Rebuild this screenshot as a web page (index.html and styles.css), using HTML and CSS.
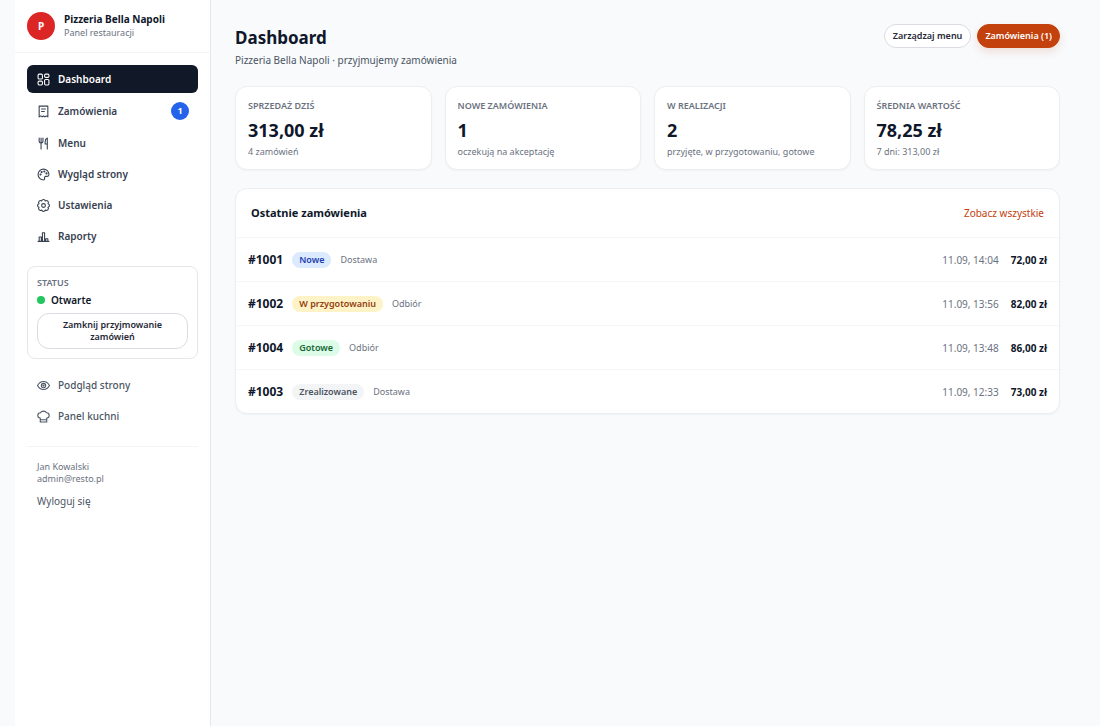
FILE: index.html
```html
<!DOCTYPE html>
<html lang="pl">
<head>
    <meta charset="UTF-8">
    <meta name="viewport" content="width=device-width, initial-scale=1.0">
    <title>Dashboard - Pizzeria Bella Napoli</title>
    <link rel="stylesheet" href="styles.css">
</head>
<body>
    <div class="layout">
        <aside class="sidebar">
            <div class="brand">
                <span class="brand-logo">P</span>
                <div>
                    <p class="brand-name">Pizzeria Bella Napoli</p>
                    <p class="brand-sub">Panel restauracji</p>
                </div>
            </div>

            <nav class="nav">
                <a href="#" class="nav-link active">
                    <svg class="icon" viewBox="0 0 24 24"><rect x="2" y="2" width="8" height="9" rx="2"/><rect x="14" y="2" width="8" height="6" rx="2"/><rect x="2" y="15" width="8" height="7" rx="2"/><rect x="14" y="12" width="8" height="10" rx="2"/></svg>
                    Dashboard
                </a>
                <a href="#" class="nav-link with-badge">
                    <svg class="icon" viewBox="0 0 24 24"><path d="M4 2h16v20l-3-2-2.500 2-2.500-2-2.500 2L7 20l-3 2z"/><path d="M8.500 7.500h7M8.500 12h5"/></svg>
                    Zamówienia
                    <span class="badge">1</span>
                </a>
                <a href="#" class="nav-link">
                    <svg class="icon" viewBox="0 0 24 24"><path d="M4 2v6a3 3 0 0 0 3 3h1a3 3 0 0 0 3-3V2M7.500 2v20M19 22V2c-2.500 1-4 4-4 7v4h4"/></svg>
                    Menu
                </a>
                <a href="#" class="nav-link">
                    <svg class="icon" viewBox="0 0 24 24"><path d="M12 2a10 10 0 1 0 0 20c1.500 0 2.300-1.200 2-2.500-.6-2.500.3-4 2.500-4H19c2 0 3-1.500 3-3.500C22 6.500 17.500 2 12 2z"/><circle cx="6.500" cy="12" r="1"/><circle cx="8.500" cy="7.500" r="1"/><circle cx="13.500" cy="6.500" r="1"/><circle cx="17.500" cy="10" r="1"/></svg>
                    Wygląd strony
                </a>
                <a href="#" class="nav-link">
                    <svg class="icon" viewBox="0 0 24 24"><circle cx="12" cy="12" r="3.500"/><path d="M20.300 8.600a3.500 3.500 0 0 1 0 6.800 3.500 3.500 0 0 1-4.900 4.900 3.500 3.500 0 0 1-6.800 0 3.500 3.500 0 0 1-4.900-4.900 3.500 3.500 0 0 1 0-6.800 3.500 3.500 0 0 1 4.900-4.900 3.500 3.500 0 0 1 6.800 0 3.500 3.500 0 0 1 4.900 4.900z"/></svg>
                    Ustawienia
                </a>
                <a href="#" class="nav-link">
                    <svg class="icon" viewBox="0 0 24 24"><path d="M2 21h20M4 21v-8h4v8M10 21V5h4v16M16 21v-5h4v5"/></svg>
                    Raporty
                </a>
            </nav>

            <section class="status">
                <p class="label">Status</p>
                <p class="status-value"><span class="dot"></span>Otwarte</p>
                <button type="button" class="btn btn-block">Zamknij przyjmowanie zamówień</button>
            </section>

            <nav class="nav nav-secondary">
                <a href="#" class="nav-link">
                    <svg class="icon" viewBox="0 0 24 24"><path d="M1 12s4-7.500 11-7.500S23 12 23 12s-4 7.500-11 7.500S1 12 1 12z"/><circle cx="12" cy="12" r="4"/><circle cx="12" cy="12" r="1"/></svg>
                    Podgląd strony
                </a>
                <a href="#" class="nav-link">
                    <svg class="icon" viewBox="0 0 24 24"><path d="M6 15c-3-.5-4.500-2.500-4.500-5 0-3 2-5 5-5 1-2 3-3 5.500-3s4.500 1 5.500 3c3 0 5 2 5 5 0 2.500-1.500 4.500-4.500 5v7H6zM6 18h12"/></svg>
                    Panel kuchni
                </a>
            </nav>

            <div class="account">
                <p>Jan Kowalski</p>
                <p>admin@resto.pl</p>
                <a href="#" class="logout">Wyloguj się</a>
            </div>
        </aside>

        <main class="content">
            <header class="page-header">
                <div>
                    <h1>Dashboard</h1>
                    <p class="subtitle">Pizzeria Bella Napoli · przyjmujemy zamówienia</p>
                </div>
                <div class="actions">
                    <a href="#" class="btn">Zarządzaj menu</a>
                    <a href="#" class="btn btn-primary">Zamówienia (1)</a>
                </div>
            </header>

            <section class="stats">
                <div class="card stat">
                    <p class="label">Sprzedaż dziś</p>
                    <p class="stat-value">313,00 zł</p>
                    <p class="stat-note">4 zamówień</p>
                </div>
                <div class="card stat">
                    <p class="label">Nowe zamówienia</p>
                    <p class="stat-value">1</p>
                    <p class="stat-note">oczekują na akceptację</p>
                </div>
                <div class="card stat">
                    <p class="label">W realizacji</p>
                    <p class="stat-value">2</p>
                    <p class="stat-note">przyjęte, w przygotowaniu, gotowe</p>
                </div>
                <div class="card stat">
                    <p class="label">Średnia wartość</p>
                    <p class="stat-value">78,25 zł</p>
                    <p class="stat-note">7 dni: 313,00 zł</p>
                </div>
            </section>

            <section class="card orders">
                <div class="orders-header">
                    <h2>Ostatnie zamówienia</h2>
                    <a href="#">Zobacz wszystkie</a>
                </div>
                <ul>
                    <li class="order">
                        <span class="order-id">#1001</span>
                        <span class="tag tag-new">Nowe</span>
                        <span class="order-type">Dostawa</span>
                        <span class="order-date">11.09, 14:04</span>
                        <span class="order-price">72,00 zł</span>
                    </li>
                    <li class="order">
                        <span class="order-id">#1002</span>
                        <span class="tag tag-progress">W przygotowaniu</span>
                        <span class="order-type">Odbiór</span>
                        <span class="order-date">11.09, 13:56</span>
                        <span class="order-price">82,00 zł</span>
                    </li>
                    <li class="order">
                        <span class="order-id">#1004</span>
                        <span class="tag tag-ready">Gotowe</span>
                        <span class="order-type">Odbiór</span>
                        <span class="order-date">11.09, 13:48</span>
                        <span class="order-price">86,00 zł</span>
                    </li>
                    <li class="order">
                        <span class="order-id">#1003</span>
                        <span class="tag tag-done">Zrealizowane</span>
                        <span class="order-type">Dostawa</span>
                        <span class="order-date">11.09, 12:33</span>
                        <span class="order-price">73,00 zł</span>
                    </li>
                </ul>
            </section>
        </main>
    </div>
</body>
</html>
```
FILE: styles.css
```css
* {
    margin: 0;
    padding: 0;
    box-sizing: border-box;
}
body {
    font-family: "Noto Sans", "Open Sans", sans-serif;
    font-size: 10px;
    line-height: 16px;
    color: #0f172a;
    background: #f8fafc;
}
a {
    color: inherit;
    text-decoration: none;
}
ul {
    list-style: none;
}
.layout {
    display: flex;
    max-width: 1070px;
    min-height: 100vh;
    margin: 0 auto;
}

/* Sidebar */
.sidebar {
    flex: 0 0 196px;
    background: #fff;
    border-right: 1px solid #e5e7eb;
}
.brand {
    display: flex;
    align-items: center;
    gap: 9px;
    height: 53px;
    padding: 0 12px;
    border-bottom: 1px solid #f3f4f6;
}
.brand-logo {
    display: flex;
    align-items: center;
    justify-content: center;
    width: 28px;
    height: 28px;
    border-radius: 50%;
    background: #dc2626;
    color: #fff;
    font-weight: 700;
}
.brand-name {
    line-height: 14px;
    font-weight: 700;
}
.brand-sub {
    font-size: 9px;
    line-height: 14px;
    color: #6b7280;
}
.nav {
    display: flex;
    flex-direction: column;
    gap: 3px;
    padding: 12px 12px 0;
}
.nav-link {
    display: flex;
    align-items: center;
    gap: 8px;
    height: 28px;
    padding: 0 9px 0 10px;
    border-radius: 6px;
    font-weight: 600;
    color: #374151;
}
.nav-link.active {
    background: #111827;
    color: #fff;
}
.with-badge {
    height: 30px;
}
.icon {
    width: 13px;
    height: 13px;
    fill: none;
    stroke: currentColor;
    stroke-width: 2;
    stroke-linecap: round;
    stroke-linejoin: round;
}
.badge {
    display: flex;
    align-items: center;
    justify-content: center;
    width: 18px;
    height: 18px;
    margin-left: auto;
    border-radius: 50%;
    background: #2563eb;
    color: #fff;
    font-size: 9px;
    font-weight: 700;
}
.label {
    font-size: 9px;
    line-height: 14px;
    font-weight: 600;
    color: #6b7280;
    text-transform: uppercase;
}
.status {
    margin: 16px 12px 0;
    padding: 9px;
    border: 1px solid #e5e7eb;
    border-radius: 8px;
}
.status-value {
    display: flex;
    align-items: center;
    gap: 6px;
    margin: 2px 0 5px;
    font-weight: 600;
}
.dot {
    width: 8px;
    height: 8px;
    border-radius: 50%;
    background: #22c55e;
}
.nav-secondary .nav-link {
    font-weight: 500;
    color: #4b5563;
}
.account {
    margin: 16px 12px 0;
    padding: 14px 10px;
    border-top: 1px solid #f3f4f6;
    font-size: 9px;
    line-height: 12px;
    color: #6b7280;
}
.logout {
    display: block;
    margin-top: 8px;
    font-size: 10px;
    line-height: 16px;
    color: #4b5563;
}

/* Buttons */
.btn {
    display: inline-block;
    padding: 5px 8px;
    border: 1px solid #d9dce1;
    border-radius: 12px;
    background: #fff;
    color: #1f2937;
    font-family: inherit;
    font-size: 9px;
    line-height: 12px;
    font-weight: 600;
    text-align: center;
    cursor: pointer;
}
.btn-block {
    width: 100%;
    padding: 5px 18px;
}
.btn-primary {
    padding: 5px 7px;
    border-color: #c2410c;
    background: #c2410c;
    color: #fff;
    box-shadow: 0 4px 8px rgba(194, 65, 12, 0.15);
}

/* Main content */
.content {
    flex: 1;
    min-width: 0;
    padding: 24px 25px 24px 24px;
}
.page-header {
    display: flex;
    justify-content: space-between;
    align-items: flex-start;
    margin-bottom: 18px;
}
.page-header h1 {
    font-size: 17px;
    line-height: 28px;
    font-weight: 700;
}
.subtitle {
    color: #4b5563;
}
.actions {
    display: flex;
    gap: 6px;
}
.card {
    background: #fff;
    border: 1px solid #eceef1;
    border-radius: 12px;
    box-shadow: 0 1px 2px rgba(0, 0, 0, 0.04);
}
.stats {
    display: grid;
    grid-template-columns: repeat(4, 1fr);
    gap: 13px;
    margin-bottom: 18px;
}
.stat {
    padding: 12px 12px 10px;
}
.stat-value {
    margin: 5px 0 3px;
    font-size: 18px;
    line-height: 24px;
    font-weight: 700;
}
.stat-note {
    font-size: 9px;
    line-height: 14px;
    color: #6b7280;
}

/* Orders */
.orders-header {
    display: flex;
    justify-content: space-between;
    align-items: center;
    height: 48px;
    padding: 0 15px;
}
.orders-header h2 {
    font-size: 11px;
    font-weight: 700;
}
.orders-header a {
    color: #c2410c;
}
.order {
    display: flex;
    align-items: center;
    height: 44px;
    padding: 0 12px;
    border-top: 1px solid #f5f6f8;
}
.order-id {
    font-size: 12px;
    font-weight: 700;
}
.tag {
    margin: 0 9px;
    padding: 0 7px;
    border-radius: 8px;
    font-size: 9px;
    font-weight: 600;
}
.tag-new {
    background: #dbeafe;
    color: #1e40af;
}
.tag-progress {
    background: #fef3c7;
    color: #92400e;
}
.tag-ready {
    background: #dcfce7;
    color: #166534;
}
.tag-done {
    background: #f3f4f6;
    color: #4b5563;
}
.order-type {
    font-size: 9px;
    color: #6b7280;
}
.order-date {
    margin-left: auto;
    color: #6b7280;
}
.order-price {
    margin-left: 12px;
    font-weight: 700;
}
```
